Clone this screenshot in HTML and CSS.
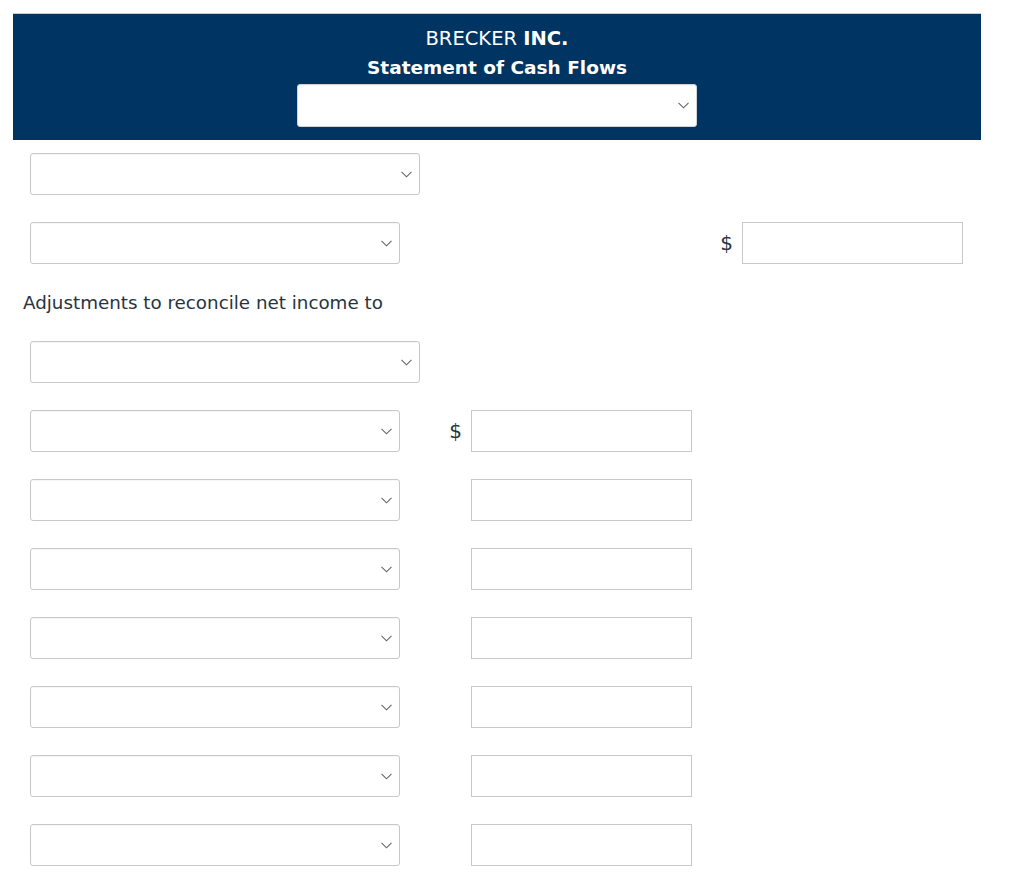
FILE: index.html
```html
<!DOCTYPE html>
<html>
<head>
<meta charset="utf-8">
<link rel="stylesheet" href="styles.css">
</head>
<body>
<div class="page">
  <div class="header">
    <div class="company">BRECKER <b>INC.</b></div>
    <div class="title">Statement of Cash Flows</div>
    <div class="sel sel-head"><select></select><svg class="chev" width="11" height="7" viewBox="0 0 11 7"><path d="M0.5 0.8 L5.5 5.8 L10.5 0.8" fill="none" stroke="#666" stroke-width="1.1"/></svg></div>
  </div>
  <div class="body">
    <div class="row">
      <div class="sel sel-wide"><select></select><svg class="chev" width="11" height="7" viewBox="0 0 11 7"><path d="M0.5 0.8 L5.5 5.8 L10.5 0.8" fill="none" stroke="#666" stroke-width="1.1"/></svg></div>
    </div>
    <div class="row">
      <div class="sel"><select></select><svg class="chev" width="11" height="7" viewBox="0 0 11 7"><path d="M0.5 0.8 L5.5 5.8 L10.5 0.8" fill="none" stroke="#666" stroke-width="1.1"/></svg></div>
      <span class="dollar dollar-far">$</span>
      <input class="amt" type="text">
    </div>
    <div class="label">Adjustments to reconcile net income to</div>
    <div class="row">
      <div class="sel sel-wide"><select></select><svg class="chev" width="11" height="7" viewBox="0 0 11 7"><path d="M0.5 0.8 L5.5 5.8 L10.5 0.8" fill="none" stroke="#666" stroke-width="1.1"/></svg></div>
    </div>
    <div class="row">
      <div class="sel"><select></select><svg class="chev" width="11" height="7" viewBox="0 0 11 7"><path d="M0.5 0.8 L5.5 5.8 L10.5 0.8" fill="none" stroke="#666" stroke-width="1.1"/></svg></div>
      <span class="dollar">$</span>
      <input class="amt" type="text">
    </div>
    <div class="row">
      <div class="sel"><select></select><svg class="chev" width="11" height="7" viewBox="0 0 11 7"><path d="M0.5 0.8 L5.5 5.8 L10.5 0.8" fill="none" stroke="#666" stroke-width="1.1"/></svg></div>
      <span class="dollar"></span>
      <input class="amt" type="text">
    </div>
    <div class="row">
      <div class="sel"><select></select><svg class="chev" width="11" height="7" viewBox="0 0 11 7"><path d="M0.5 0.8 L5.5 5.8 L10.5 0.8" fill="none" stroke="#666" stroke-width="1.1"/></svg></div>
      <span class="dollar"></span>
      <input class="amt" type="text">
    </div>
    <div class="row">
      <div class="sel"><select></select><svg class="chev" width="11" height="7" viewBox="0 0 11 7"><path d="M0.5 0.8 L5.5 5.8 L10.5 0.8" fill="none" stroke="#666" stroke-width="1.1"/></svg></div>
      <span class="dollar"></span>
      <input class="amt" type="text">
    </div>
    <div class="row">
      <div class="sel"><select></select><svg class="chev" width="11" height="7" viewBox="0 0 11 7"><path d="M0.5 0.8 L5.5 5.8 L10.5 0.8" fill="none" stroke="#666" stroke-width="1.1"/></svg></div>
      <span class="dollar"></span>
      <input class="amt" type="text">
    </div>
    <div class="row">
      <div class="sel"><select></select><svg class="chev" width="11" height="7" viewBox="0 0 11 7"><path d="M0.5 0.8 L5.5 5.8 L10.5 0.8" fill="none" stroke="#666" stroke-width="1.1"/></svg></div>
      <span class="dollar"></span>
      <input class="amt" type="text">
    </div>
    <div class="row">
      <div class="sel"><select></select><svg class="chev" width="11" height="7" viewBox="0 0 11 7"><path d="M0.5 0.8 L5.5 5.8 L10.5 0.8" fill="none" stroke="#666" stroke-width="1.1"/></svg></div>
      <span class="dollar"></span>
      <input class="amt" type="text">
    </div>
  </div>
</div>
</body>
</html>
```
FILE: styles.css
```css
html, body {
  margin: 0;
  padding: 0;
  background: #fff;
}
body {
  font-family: "DejaVu Sans", Verdana, sans-serif;
  color: #26343e;
}
.page {
  padding-top: 13px;
  width: 1024px;
}
.header {
  margin-left: 13px;
  width: 968px;
  background: #003462;
  border-top: 1px solid #c4cdd6;
  box-sizing: border-box;
  height: 127px;
  padding-top: 13px;
  display: flex;
  flex-direction: column;
  align-items: center;
  color: #fff;
}
.company {
  font-size: 19.5px;
  line-height: 24px;
}
.company b {
  font-weight: bold;
}
.title {
  font-size: 18.5px;
  font-weight: bold;
  line-height: 24px;
  margin-top: 5px;
}
.sel {
  position: relative;
  width: 370px;
  height: 42px;
  flex: none;
}
.sel select {
  appearance: none;
  -webkit-appearance: none;
  width: 100%;
  height: 100%;
  margin: 0;
  border: 1px solid #c8c8c8;
  border-radius: 3px;
  background: #fff;
  box-shadow: 0 1px 1px rgba(0,0,0,0.04) inset;
  box-sizing: border-box;
  display: block;
}
.sel .chev {
  position: absolute;
  right: 8px;
  top: 18px;
  pointer-events: none;
}
.sel-wide {
  width: 390px;
}
.sel-head {
  width: 400px;
  height: 43px;
  margin-top: 4px;
}
.sel-head select {
  border-color: #d0d4d8;
}
.body {
  padding-left: 30px;
  padding-top: 13px;
}
.row {
  display: flex;
  align-items: center;
  height: 42px;
  margin-bottom: 27px;
}
.dollar {
  width: 62px;
  text-align: right;
  padding-right: 9px;
  font-size: 20px;
  flex: none;
}
.dollar-far {
  width: 333px;
}
.amt {
  width: 221px;
  height: 42px;
  box-sizing: border-box;
  border: 1px solid #c8c8c8;
  margin: 0;
  padding: 0;
  background: #fff;
  flex: none;
}
.label {
  margin-left: -7px;
  font-size: 18.3px;
  line-height: 24px;
  margin-top: 2px;
  margin-bottom: 26px;
}
```
